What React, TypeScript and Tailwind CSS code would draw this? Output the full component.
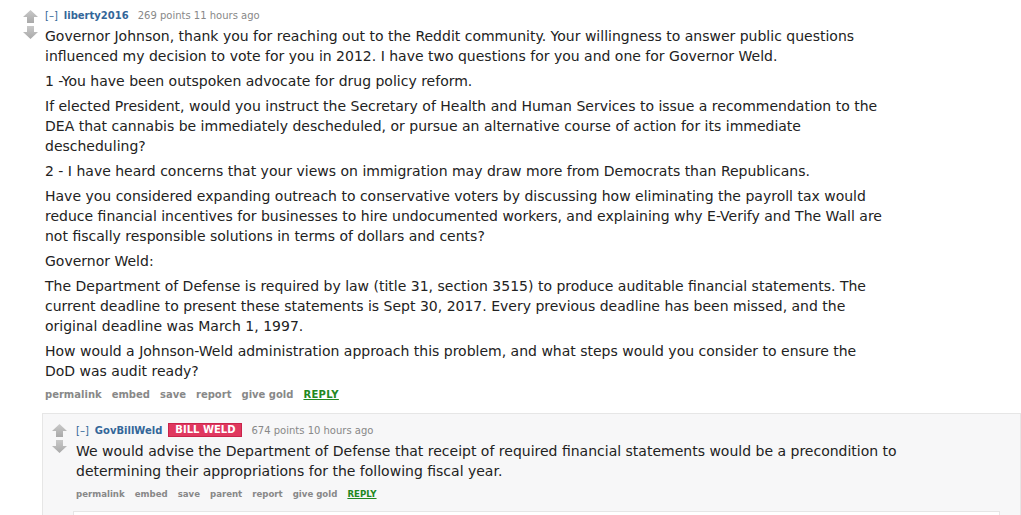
import React from "react";

const Up = () => (
  <svg width="15" height="13" viewBox="0 0 15 13">
    <defs>
      <linearGradient id="gu" x1="0" y1="0" x2="0" y2="1">
        <stop offset="0" stopColor="#c9c9c9" />
        <stop offset="1" stopColor="#a9a9a9" />
      </linearGradient>
    </defs>
    <path d="M7.5 0 L15 7 L11 7 L11 13 L4 13 L4 7 L0 7 Z" fill="url(#gu)" />
  </svg>
);
const Down = () => (
  <svg width="15" height="13" viewBox="0 0 15 13">
    <defs>
      <linearGradient id="gd" x1="0" y1="0" x2="0" y2="1">
        <stop offset="0" stopColor="#c9c9c9" />
        <stop offset="1" stopColor="#a9a9a9" />
      </linearGradient>
    </defs>
    <path d="M4 0 L11 0 L11 6 L15 6 L7.5 13 L0 6 L4 6 Z" fill="url(#gd)" />
  </svg>
);

const Arrows = () => (
  <div className="flex flex-col items-center gap-[3px] w-[15px] shrink-0 pt-[1px]">
    <Up />
    <Down />
  </div>
);

const P = ({ children }: { children: React.ReactNode }) => (
  <p className="mb-[5px] leading-[20px]">{children}</p>
);

const Btn = ({ children }: { children: React.ReactNode }) => (
  <span className="text-[#888] font-bold">{children}</span>
);

export default function App() {
  return (
    <div
      className="w-[1021px] h-[515px] overflow-hidden bg-white text-[#222]"
      style={{ fontFamily: "Verdana, 'DejaVu Sans', sans-serif" }}
    >
      <div className="flex pl-[23px] pt-[9px]">
        <Arrows />
        <div className="ml-[7px] flex-1 min-w-0">
          <div className="text-[10px] leading-[13px] mb-[4px]">
            <span className="text-[#369]">[–]</span>
            <span className="text-[#369] font-bold ml-[6px]">liberty2016</span>
            <span className="text-[#888] ml-[9px]">269 points 11 hours ago</span>
          </div>
          <div className="text-[14px] max-w-[840px]">
            <P>
              Governor Johnson, thank you for reaching out to the Reddit community. Your willingness to answer public questions influenced my decision to vote for you in 2012. I have two questions for you and one for Governor Weld.
            </P>
            <P>1 -You have been outspoken advocate for drug policy reform.</P>
            <P>
              If elected President, would you instruct the Secretary of Health and Human Services to issue a recommendation to the DEA that cannabis be immediately descheduled, or pursue an alternative course of action for its immediate descheduling?
            </P>
            <P>2 - I have heard concerns that your views on immigration may draw more from Democrats than Republicans.</P>
            <P>
              Have you considered expanding outreach to conservative voters by discussing how eliminating the payroll tax would reduce financial incentives for businesses to hire undocumented workers, and explaining why E-Verify and The Wall are not fiscally responsible solutions in terms of dollars and cents?
            </P>
            <P>Governor Weld:</P>
            <P>
              The Department of Defense is required by law (title 31, section 3515) to produce auditable financial statements. The current deadline to present these statements is Sept 30, 2017. Every previous deadline has been missed, and the original deadline was March 1, 1997.
            </P>
            <P>
              How would a Johnson-Weld administration approach this problem, and what steps would you consider to ensure the DoD was audit ready?
            </P>
          </div>
          <div className="flex gap-[10px] text-[10px] leading-[14px] pt-[2px]">
            <Btn>permalink</Btn>
            <Btn>embed</Btn>
            <Btn>save</Btn>
            <Btn>report</Btn>
            <Btn>give gold</Btn>
            <span className="text-[#228822] font-bold underline tracking-[0.3px]">REPLY</span>
          </div>
          <div className="-ml-[3px] mt-[11px] bg-[#f7f7f8] border border-[#e6e6e6] pl-[9px] pt-[9px] min-h-[120px]">
            <div className="flex">
              <Arrows />
              <div className="ml-[9px] flex-1 min-w-0">
                <div className="text-[10px] leading-[13px] mb-[4px] flex items-center">
                  <span className="text-[#369]">[–]</span>
                  <span className="text-[#369] font-bold ml-[6px]">GovBillWeld</span>
                  <span className="ml-[6px] bg-[#e0385f] border border-[#c9244b] text-white font-bold px-[6px] leading-[12px]">BILL WELD</span>
                  <span className="text-[#888] ml-[9px]">674 points 10 hours ago</span>
                </div>
                <div className="text-[14px] max-w-[840px]">
                  <P>
                    We would advise the Department of Defense that receipt of required financial statements would be a precondition to determining their appropriations for the following fiscal year.
                  </P>
                </div>
                <div className="flex gap-[10px] text-[8.6px] leading-[14px] pt-[1px]">
                  <Btn>permalink</Btn>
                  <Btn>embed</Btn>
                  <Btn>save</Btn>
                  <Btn>parent</Btn>
                  <Btn>report</Btn>
                  <Btn>give gold</Btn>
                  <span className="text-[#228822] font-bold underline">REPLY</span>
                </div>
                <div className="-ml-[3px] mt-[10px] mr-[20px] bg-white border border-[#e6e6e6] h-[40px]" />
              </div>
            </div>
          </div>
        </div>
      </div>
    </div>
  );
}
